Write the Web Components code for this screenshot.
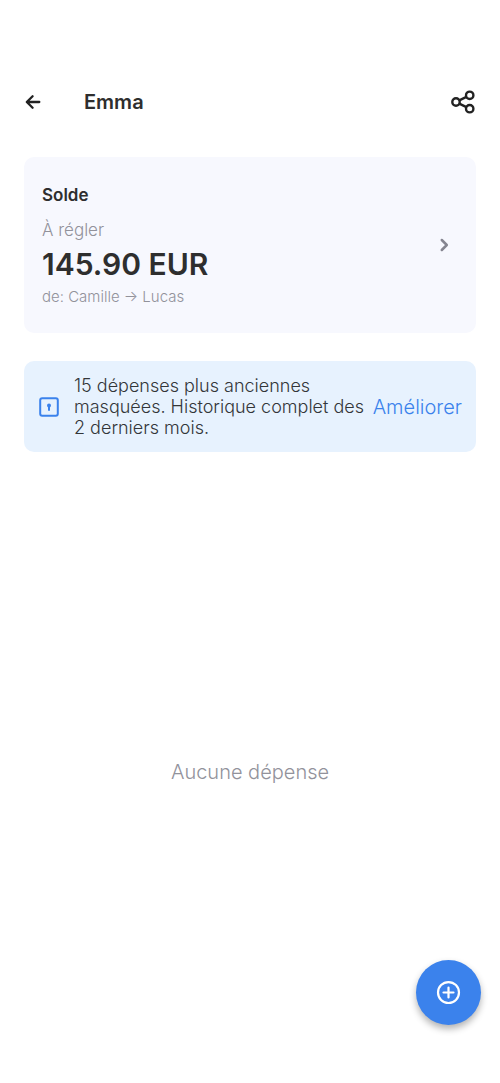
<!DOCTYPE html>
<html lang="fr">
<head>
<meta charset="utf-8">
<meta name="viewport" content="width=device-width, initial-scale=1">
<title>Emma</title>
<style>
html, body { margin: 0; background: #fff; }
body { font-family: Inter, "Open Sans", sans-serif; color: #2e2e2e;
  --muted: #92929b; --blue: #3b82ec; }
</style>
</head>
<body>
<expense-screen>
  <top-bar slot="header">Emma</top-bar>
  <balance-card label="Solde" status="À régler" amount="145.90 EUR" detail="de: Camille → Lucas"></balance-card>
  <upgrade-banner action="Améliorer">15 dépenses plus anciennes masquées. Historique complet des 2 derniers mois.</upgrade-banner>
  <empty-state>Aucune dépense</empty-state>
  <add-button slot="fab"></add-button>
</expense-screen>
<script>
const define = (name, html) => customElements.define(name, class extends HTMLElement {
  constructor() {
    super();
    const t = document.createElement('template');
    t.innerHTML = html;
    this.attachShadow({ mode: 'open' }).append(t.content.cloneNode(true));
  }
  connectedCallback() {
    this.shadowRoot.querySelectorAll('[data-attr]').forEach(el => {
      el.textContent = this.getAttribute(el.dataset.attr) || '';
    });
  }
});

define('expense-screen', `
<style>
:host { display: flex; flex-direction: column; min-height: 100vh; box-sizing: border-box; padding: 78px 24px 0; }
main { flex: 1; display: flex; flex-direction: column; gap: 28px; padding-top: 32px; }
.fab { position: fixed; right: 19px; bottom: 58px; }
</style>
<slot name="header"></slot>
<main><slot></slot></main>
<div class="fab"><slot name="fab"></slot></div>`);

define('top-bar', `
<style>
:host { display: block; }
header { display: flex; align-items: center; height: 47px; }
button { border: 0; background: none; padding: 0; color: #222; display: flex; cursor: pointer; }
h1 { flex: 1; margin: 0 0 0 42px; font-size: 20px; line-height: 28px; font-weight: 600; }
</style>
<header>
  <button aria-label="Retour"><svg width="18" height="18" viewBox="0 0 18 18" fill="none" stroke="currentColor" stroke-width="2.3" stroke-linecap="round" stroke-linejoin="round"><path d="M15.300 9H3.200M8.600 3.200L2.800 9l5.800 5.800"/></svg></button>
  <h1><slot></slot></h1>
  <button aria-label="Partager"><svg width="28" height="28" viewBox="0 0 28 28" fill="none" stroke="currentColor" stroke-width="2.400"><circle cx="8" cy="14" r="3.700"/><circle cx="21.700" cy="7.300" r="3.700"/><circle cx="21.700" cy="20.700" r="3.700"/><path d="M11.300 12.400l7.100-3.500M11.300 15.600l7.100 3.500"/></svg></button>
</header>`);

define('balance-card', `
<style>
:host { display: block; }
button { width: 100%; display: flex; align-items: center; justify-content: space-between; border: 0; border-radius: 10px; background: #f7f8fe; padding: 24px 23px 24px 18px; font: inherit; color: inherit; text-align: left; cursor: pointer; }
.text { display: flex; flex-direction: column; }
.label { font-size: 17px; line-height: 28px; font-weight: 600; padding-bottom: 8px; }
.status { font-size: 17px; line-height: 26px; color: var(--muted); }
.amount { font-size: 30px; line-height: 42px; font-weight: 600; }
.detail { font-size: 15px; line-height: 24px; color: var(--muted); }
.status, .detail { font-weight: 300; }
svg { color: #858590; }
</style>
<button>
  <span class="text">
    <span class="label" data-attr="label"></span>
    <span class="status" data-attr="status"></span>
    <span class="amount" data-attr="amount"></span>
    <span class="detail" data-attr="detail"></span>
  </span>
  <svg width="18" height="18" viewBox="0 0 18 18" fill="none" stroke="currentColor" stroke-width="2.500" stroke-linecap="round" stroke-linejoin="round"><path d="M6.800 4L11.800 9l-5 5"/></svg>
</button>`);

define('upgrade-banner', `
<style>
:host { display: flex; align-items: center; border-radius: 10px; background: #e7f2fe; padding: 14px; }
svg { flex: none; color: var(--blue); }
p { flex: 1; margin: 0 4px 0 14px; font-size: 18px; line-height: 21px; font-weight: 300; color: #333639; }
a { font-size: 20px; line-height: 28px; font-weight: 300; color: var(--blue); text-decoration: none; }
</style>
<svg width="22" height="22" viewBox="0 0 22 22" fill="none" stroke="currentColor" stroke-width="2"><rect x="2.200" y="2.200" width="17.600" height="17.600" rx="2"/><circle cx="11" cy="9.600" r="2" fill="currentColor" stroke="none"/><path d="M11 10v4.800"/></svg>
<p><slot></slot></p>
<a href="#upgrade" data-attr="action"></a>`);

define('empty-state', `
<style>
:host { flex: 1; display: flex; align-items: center; justify-content: center; box-sizing: border-box; padding-bottom: 20px; font-size: 20px; line-height: 28px; font-weight: 300; color: var(--muted); }
</style>
<slot></slot>`);

define('add-button', `
<style>
:host { display: block; }
button { width: 65px; height: 65px; border: 0; border-radius: 50%; padding: 0; background: var(--blue); color: #fff; display: flex; align-items: center; justify-content: center; box-shadow: 0 4px 7px rgba(0,0,0,.3); cursor: pointer; }
</style>
<button aria-label="Ajouter une dépense"><svg width="25" height="25" viewBox="0 0 26 26" fill="none" stroke="currentColor" stroke-width="2.300" stroke-linecap="round"><circle cx="13" cy="13" r="10.900"/><path d="M13 7.800v10.400M7.800 13h10.400"/></svg></button>`);
</script>
</body>
</html>
